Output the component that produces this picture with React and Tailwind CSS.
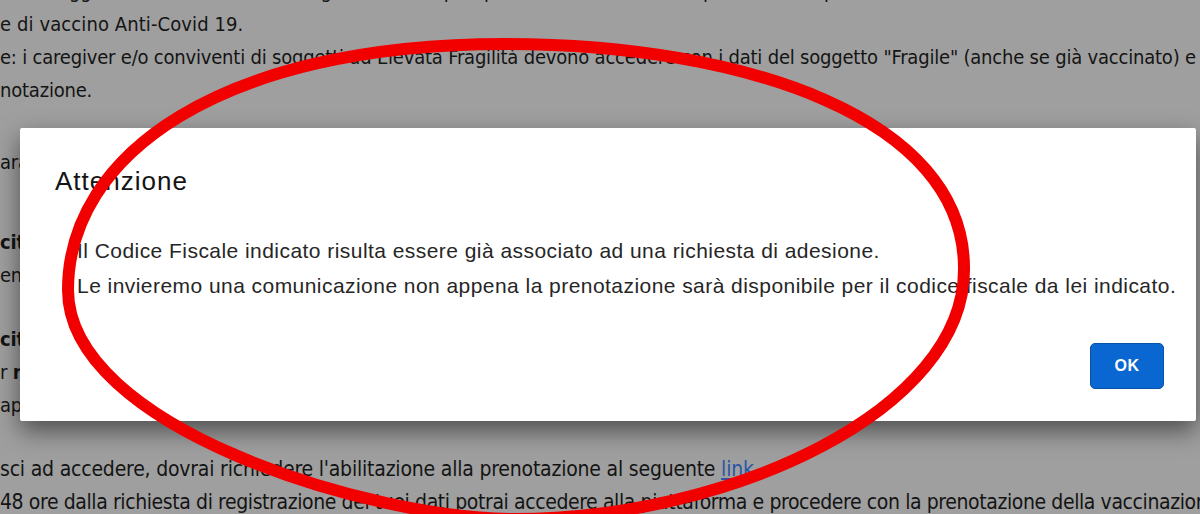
import React from "react";

function Line({ children, bold = false, className = "" }) {
  return (
    <div className={`h-[33px] leading-[33px] whitespace-nowrap ${bold ? "font-bold" : ""} ${className}`}>
      {children}
    </div>
  );
}

export default function App() {
  return (
    <div className="relative w-[1200px] h-[514px] overflow-hidden bg-[#9f9f9f]">
      {/* background page */}
      <div className="flex flex-col font-['DejaVu_Sans_Condensed','Liberation_Sans_Narrow','Liberation_Sans',sans-serif] text-[20px] text-[#141414] tracking-[-0.2px]">
        <Line className="mt-[-25px]">
          ei un soggetto che rientra nelle categorie di cui sopra, puoi accedere al form di prenotazione per ricevere la somministrazione della
        </Line>
        <Line className="tracking-[0.1px]">e di vaccino Anti-Covid 19.</Line>
        <Line>
          e: i caregiver e/o conviventi di soggetti ad Elevata Fragilità devono accedere con i dati del soggetto "Fragile" (anche se già vaccinato) e
        </Line>
        <Line>notazione.</Line>
        <div className="h-[39px]" />
        <Line>arantire la prenotazione a tutti i soggetti aventi diritto</Line>
        <div className="h-[47px]" />
        <Line bold>citazione</Line>
        <Line>endo i dati richiesti</Line>
        <div className="h-[31px]" />
        <Line bold>citazione</Line>
        <Line>r <span className="font-bold">n</span>on riesci</Line>
        <Line>appena possibile</Line>
        <div className="h-[31px]" />
        <Line className="text-[21px]">
          sci ad accedere, dovrai richiedere l'abilitazione alla prenotazione al seguente{" "}
          <span className="text-[#2a56a6] underline">link</span>.
        </Line>
        <Line className="text-[21px] tracking-[-0.4px]">
          48 ore dalla richiesta di registrazione dei tuoi dati potrai accedere alla piattaforma e procedere con la prenotazione della vaccinazione.
        </Line>
      </div>

      {/* modal dialog */}
      <div className="absolute left-[20px] top-[128px] w-[1176px] h-[293px] bg-white rounded-[2px] shadow-[0_10px_24px_rgba(0,0,0,0.5)] flex flex-col font-['Liberation_Sans',sans-serif]">
        <div className="pt-[38px] pl-[35px]">
          <div className="text-[26px] leading-[30px] text-[#141414] tracking-[1px]">Attenzione</div>
        </div>
        <div className="mt-[37px] pl-[57px] text-[21px] leading-[35px] text-[#262626] tracking-[0.45px]">
          <div>Il Codice Fiscale indicato risulta essere già associato ad una richiesta di adesione.</div>
          <div>Le invieremo una comunicazione non appena la prenotazione sarà disponibile per il codice fiscale da lei indicato.</div>
        </div>
        <div className="mt-[40px] pr-[32px] flex justify-end">
          <button className="w-[74px] h-[46px] rounded-[5px] bg-[#0a66d1] border border-[#0852a8] text-white font-bold text-[16px] tracking-[0.5px]">
            OK
          </button>
        </div>
      </div>

      {/* red hand-drawn ellipse */}
      <svg className="absolute inset-0 pointer-events-none" width="1200" height="514" viewBox="0 0 1200 514">
        <path
          d="M505 44 C745 44 964 118 964 268 C966 410 730 519 515 519 C370 519 68 427 68 290 C68 155 220 44 505 44 Z"
          fill="none"
          stroke="#f20000"
          strokeWidth="12"
          strokeLinejoin="round"
        />
      </svg>
    </div>
  );
}
